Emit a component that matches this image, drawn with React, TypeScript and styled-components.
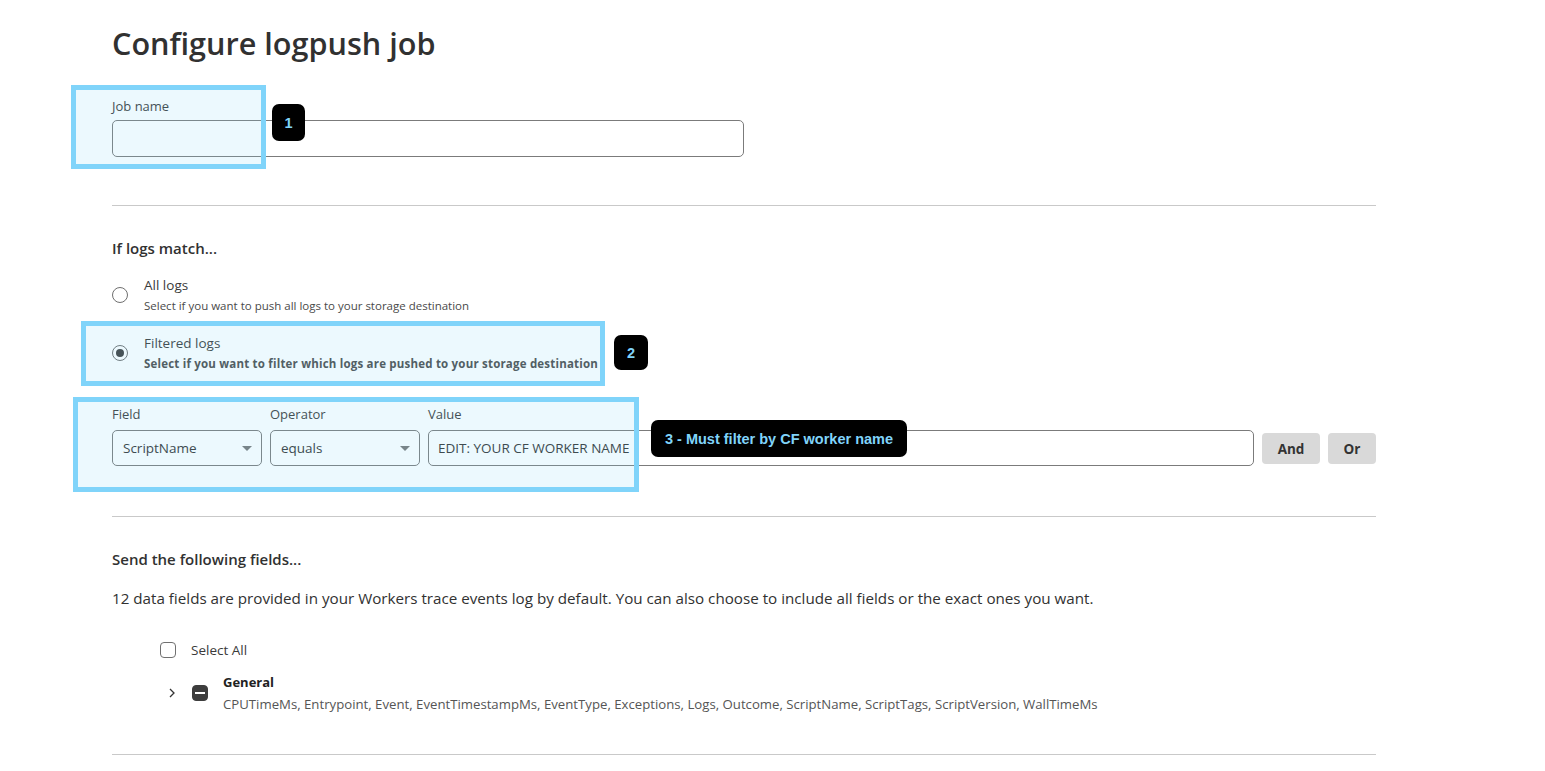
import styled, { createGlobalStyle } from "styled-components";

const GlobalStyle = createGlobalStyle`
    html, body {
        margin: 0;
        padding: 0;
        background: #ffffff;
    }
    body {
        font-family: "Open Sans", "Noto Sans", "DejaVu Sans", sans-serif;
        color: #313131;
    }
`;

const Page = styled.main`
    position: relative;
    width: 1264px;
    padding: 24px 0 40px 112px;
`;

const Title = styled.h1`
    margin: 0;
    font-size: 30.6px;
    line-height: 38px;
    font-weight: 600;
    color: #313131;
`;

const Label = styled.label`
    display: block;
    font-size: 13px;
    line-height: 18px;
    color: #3a3a3a;
`;

const JobField = styled.div`
    margin-top: 35px;
    width: 632px;

    ${Label} {
        margin-bottom: 5px;
    }
`;

const TextBox = styled.div<{ $h: number; $grow?: boolean }>`
    box-sizing: border-box;
    height: ${p => p.$h}px;
    border: 1px solid #7b7b7b;
    border-radius: 5px;
    background: #fff;
    display: flex;
    align-items: center;
    padding: 0 9px;
    font-size: 13.5px;
    color: #333;
    flex: ${p => (p.$grow ? "1" : "none")};
    white-space: nowrap;
    overflow: hidden;
`;

const Divider = styled.hr<{ $top: number }>`
    margin: ${p => p.$top}px 0 0;
    border: none;
    border-top: 1px solid #c9c9c9;
    height: 0;
`;

const SectionHeading = styled.h2<{ $top: number }>`
    margin: ${p => p.$top}px 0 0;
    font-size: 15px;
    line-height: 20px;
    font-weight: 600;
    color: #313131;
`;

const RadioOption = styled.div<{ $top: number }>`
    display: flex;
    align-items: center;
    gap: 16px;
    margin-top: ${p => p.$top}px;
`;

const RadioDot = styled.span<{ $checked?: boolean }>`
    box-sizing: border-box;
    width: 16px;
    height: 16px;
    border-radius: 50%;
    border: 1px solid #6f6f6f;
    background: #fff;
    display: flex;
    align-items: center;
    justify-content: center;

    &::after {
        content: "";
        width: 8px;
        height: 8px;
        border-radius: 50%;
        background: ${p => (p.$checked ? "#3d3d3d" : "transparent")};
    }
`;

const OptionText = styled.div`
    display: flex;
    flex-direction: column;
    gap: 3px;
`;

const OptionTitle = styled.span`
    font-size: 13.5px;
    line-height: 20px;
    color: #3a3a3a;
`;

const OptionHint = styled.span<{ $bold?: boolean }>`
    font-size: 11.5px;
    line-height: 16px;
    color: #4a4a4a;
    font-weight: ${p => (p.$bold ? 700 : 400)};
    letter-spacing: ${p => (p.$bold ? "0.2px" : "0")};
`;

const FilterRow = styled.div`
    margin-top: 33px;
    display: flex;
    align-items: flex-end;
    gap: 8px;
`;

const FilterCol = styled.div<{ $grow?: boolean }>`
    display: flex;
    flex-direction: column;
    gap: 7px;
    width: ${p => (p.$grow ? "auto" : "150px")};
    flex: ${p => (p.$grow ? "1" : "none")};
`;

const SelectBox = styled.div`
    box-sizing: border-box;
    height: 36px;
    border: 1px solid #7b7b7b;
    border-radius: 5px;
    display: flex;
    align-items: center;
    justify-content: space-between;
    padding: 0 9px 0 10px;
    font-size: 13.5px;
    color: #333;

    &::after {
        content: "";
        border-left: 5px solid transparent;
        border-right: 5px solid transparent;
        border-top: 5px solid #777;
    }
`;

const Button = styled.button<{ $w: number }>`
    width: ${p => p.$w}px;
    height: 31px;
    margin-bottom: 2px;
    border: none;
    border-radius: 4px;
    background: #d9d9d9;
    font-family: inherit;
    font-size: 13.5px;
    font-weight: 700;
    color: #333;
    padding: 0;
`;

const Paragraph = styled.p`
    margin: 18px 0 0;
    font-size: 15.2px;
    line-height: 22px;
    color: #313131;
`;

const FieldTree = styled.div`
    margin-top: 31px;
    padding-left: 48px;
`;

const CheckRow = styled.div`
    display: flex;
    align-items: center;
    gap: 15px;
    font-size: 13.5px;
    line-height: 20px;
    color: #3a3a3a;
`;

const CheckBox = styled.span<{ $mixed?: boolean }>`
    box-sizing: border-box;
    width: 16px;
    height: 16px;
    border-radius: 4px;
    border: 1px solid ${p => (p.$mixed ? "#3d3d3d" : "#707070")};
    background: ${p => (p.$mixed ? "#3d3d3d" : "#fff")};
    display: flex;
    align-items: center;
    justify-content: center;
    flex: none;

    &::after {
        content: "";
        display: ${p => (p.$mixed ? "block" : "none")};
        width: 10px;
        height: 2px;
        background: #fff;
    }
`;

const GroupRow = styled.div`
    margin-top: 13px;
    display: flex;
    align-items: center;
`;

const Chevron = styled.svg`
    width: 16px;
    height: 16px;
    margin-left: 4px;
    margin-right: 12px;
    flex: none;
`;

const GroupText = styled.div`
    margin-left: 15px;
    display: flex;
    flex-direction: column;
    gap: 4px;
`;

const GroupTitle = styled.span`
    font-size: 13px;
    line-height: 18px;
    font-weight: 700;
    color: #222;
`;

const GroupList = styled.span`
    font-size: 13.2px;
    line-height: 18px;
    color: #555;
`;

/* annotation overlays */
const Highlight = styled.div<{ $x: number; $y: number; $w: number; $h: number }>`
    position: absolute;
    left: ${p => p.$x}px;
    top: ${p => p.$y}px;
    width: ${p => p.$w}px;
    height: ${p => p.$h}px;
    box-sizing: border-box;
    border: 5px solid #80d4fa;
    background: rgba(128, 212, 250, 0.15);
    pointer-events: none;
`;

const Badge = styled.div<{ $x: number; $y: number; $w: number; $h: number }>`
    position: absolute;
    left: ${p => p.$x}px;
    top: ${p => p.$y}px;
    width: ${p => p.$w}px;
    height: ${p => p.$h}px;
    box-sizing: border-box;
    background: #000;
    border-radius: 7px;
    display: flex;
    align-items: center;
    justify-content: center;
    font-family: "Liberation Sans", Arial, sans-serif;
    font-size: 14.5px;
    font-weight: 700;
    color: #80d4fa;
    white-space: nowrap;
`;

export default function App() {
    return (
        <>
            <GlobalStyle />
            <Page>
                <Title>Configure logpush job</Title>

                <JobField>
                    <Label>Job name</Label>
                    <TextBox $h={37} $grow />
                </JobField>

                <Divider $top={48} />

                <SectionHeading $top={32}>If logs match...</SectionHeading>

                <RadioOption $top={17}>
                    <RadioDot />
                    <OptionText>
                        <OptionTitle>All logs</OptionTitle>
                        <OptionHint>Select if you want to push all logs to your storage destination</OptionHint>
                    </OptionText>
                </RadioOption>

                <RadioOption $top={19}>
                    <RadioDot $checked />
                    <OptionText>
                        <OptionTitle>Filtered logs</OptionTitle>
                        <OptionHint $bold>Select if you want to filter which logs are pushed to your storage destination</OptionHint>
                    </OptionText>
                </RadioOption>

                <FilterRow>
                    <FilterCol>
                        <Label>Field</Label>
                        <SelectBox>ScriptName</SelectBox>
                    </FilterCol>
                    <FilterCol>
                        <Label>Operator</Label>
                        <SelectBox>equals</SelectBox>
                    </FilterCol>
                    <FilterCol $grow>
                        <Label>Value</Label>
                        <TextBox $h={36}>EDIT: YOUR CF WORKER NAME</TextBox>
                    </FilterCol>
                    <Button $w={58}>And</Button>
                    <Button $w={48}>Or</Button>
                </FilterRow>

                <Divider $top={50} />

                <SectionHeading $top={32}>Send the following fields...</SectionHeading>
                <Paragraph>
                    12 data fields are provided in your Workers trace events log by default. You can also choose to include all fields or the exact ones you want.
                </Paragraph>

                <FieldTree>
                    <CheckRow>
                        <CheckBox />
                        Select All
                    </CheckRow>
                    <GroupRow>
                        <Chevron viewBox="0 0 16 16" fill="none" stroke="#333" strokeWidth="1.3">
                            <path d="M6 4l4 4-4 4" />
                        </Chevron>
                        <CheckBox $mixed />
                        <GroupText>
                            <GroupTitle>General</GroupTitle>
                            <GroupList>
                                CPUTimeMs, Entrypoint, Event, EventTimestampMs, EventType, Exceptions, Logs, Outcome, ScriptName, ScriptTags, ScriptVersion, WallTimeMs
                            </GroupList>
                        </GroupText>
                    </GroupRow>
                </FieldTree>

                <Divider $top={41} />

                <Highlight $x={71} $y={85} $w={195} $h={84} />
                <Badge $x={272} $y={104} $w={33} $h={37}>1</Badge>

                <Highlight $x={81} $y={321} $w={524} $h={65} />
                <Badge $x={614} $y={335} $w={34} $h={35}>2</Badge>

                <Highlight $x={73} $y={397} $w={566} $h={95} />
                <Badge $x={651} $y={420} $w={256} $h={37}>3 - Must filter by CF worker name</Badge>
            </Page>
        </>
    );
}
